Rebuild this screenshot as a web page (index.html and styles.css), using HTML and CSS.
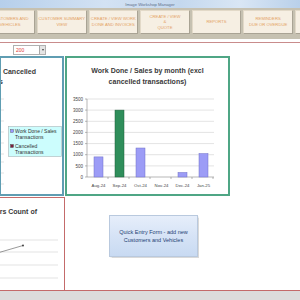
FILE: index.html
```html
<!DOCTYPE html>
<html>
<head>
<meta charset="utf-8">
<link rel="stylesheet" href="styles.css">
</head>
<body>
<div class="app">
  <div class="titlebar"><span>Image Workshop Manager</span></div>
  <div class="nav">
    <div class="navbtn">CUSTOMERS AND<br>VEHICLES</div>
    <div class="navbtn">CUSTOMER SUMMARY<br>VIEW</div>
    <div class="navbtn">CREATE / VIEW WORK<br>DONE AND INVOICES</div>
    <div class="navbtn">CREATE / VIEW<br>&amp;<br>QUOTE</div>
    <div class="navbtn">REPORTS</div>
    <div class="navbtn">REMINDERS<br>DUE OR OVERDUE</div>
    <div class="navbtn">SETTINGS</div>
  </div>
  <div class="gap"></div>
  <div class="redrule"></div>
  <div class="toolbar">
    <div class="select"><span class="val">200</span><span class="arrow"><span class="tri"></span></span></div>
  </div>
  <div class="charts">
    <div class="panel panel-left">
      <svg class="chart" width="61" height="136" viewBox="0 0 61 136">
        <text class="title" x="35" y="15.5" text-anchor="end">Work Done / Sales vs Cancelled</text>
        <text class="title" x="2" y="25.5" text-anchor="end">Transactions</text>
        <g class="grid">
          <line x1="-1" x2="3" y1="41" y2="41"/>
          <line x1="-1" x2="3" y1="52" y2="52"/>
          <line x1="-1" x2="3" y1="63" y2="63"/>
          <line x1="-1" x2="3" y1="74" y2="74"/>
          <line x1="-1" x2="3" y1="85" y2="85"/>
          <line x1="-1" x2="3" y1="96" y2="96"/>
          <line x1="-1" x2="3" y1="104" y2="104"/>
          <line x1="-1" x2="3" y1="115" y2="115"/>
          <line x1="-1" x2="3" y1="126" y2="126"/>
        </g>
        <rect class="legend" x="7.5" y="68.5" width="53" height="30"/>
        <rect x="9.5" y="71.5" width="3" height="3" fill="#9999ff" stroke="#555" stroke-width="0.4"/>
        <text class="leg" x="14" y="74.8">Work Done / Sales</text>
        <text class="leg" x="14" y="80.8">Transactions</text>
        <rect x="9.5" y="86.5" width="3" height="3" fill="#7a1f3d" stroke="#444" stroke-width="0.4"/>
        <text class="leg" x="14" y="89.8">Cancelled</text>
        <text class="leg" x="14" y="95.8">Transactions</text>
      </svg>
    </div>
    <div class="panel panel-mid">
      <svg class="chart" width="161" height="136" viewBox="0 0 161 136">
        <text class="title" x="80.5" y="14.5" text-anchor="middle">Work Done / Sales by month (excl</text>
        <text class="title" x="80.5" y="25.5" text-anchor="middle">cancelled transactions)</text>
        <g class="grid">
          <line x1="20" x2="147" y1="107.9" y2="107.9"/>
          <line x1="20" x2="147" y1="96.7" y2="96.7"/>
          <line x1="20" x2="147" y1="85.6" y2="85.6"/>
          <line x1="20" x2="147" y1="74.4" y2="74.4"/>
          <line x1="20" x2="147" y1="63.3" y2="63.3"/>
          <line x1="20" x2="147" y1="52.1" y2="52.1"/>
          <line x1="20" x2="147" y1="41" y2="41"/>
        </g>
        <g class="axis">
          <line x1="20" x2="20" y1="41" y2="119"/>
          <line x1="18" x2="147" y1="119" y2="119"/>
          <line x1="18" x2="20" y1="107.9" y2="107.9"/>
          <line x1="18" x2="20" y1="96.7" y2="96.7"/>
          <line x1="18" x2="20" y1="85.6" y2="85.6"/>
          <line x1="18" x2="20" y1="74.4" y2="74.4"/>
          <line x1="18" x2="20" y1="63.3" y2="63.3"/>
          <line x1="18" x2="20" y1="52.1" y2="52.1"/>
          <line x1="18" x2="20" y1="41" y2="41"/>
          <line x1="41" x2="41" y1="119" y2="121"/>
          <line x1="62" x2="62" y1="119" y2="121"/>
          <line x1="83" x2="83" y1="119" y2="121"/>
          <line x1="104" x2="104" y1="119" y2="121"/>
          <line x1="125" x2="125" y1="119" y2="121"/>
          <line x1="146" x2="146" y1="119" y2="121"/>
        </g>
        <g class="ylab">
          <text x="16" y="120.6">0</text>
          <text x="16" y="109.5">500</text>
          <text x="16" y="98.3">1000</text>
          <text x="16" y="87.2">1500</text>
          <text x="16" y="76">2000</text>
          <text x="16" y="64.9">2500</text>
          <text x="16" y="53.7">3000</text>
          <text x="16" y="42.6">3500</text>
        </g>
        <rect class="bar" x="27" y="98.9" width="9" height="20.1"/>
        <rect class="bar green" x="48" y="52.1" width="9" height="66.9"/>
        <rect class="bar" x="69" y="90" width="9" height="29"/>
        <rect class="bar" x="111" y="114.5" width="9" height="4.5"/>
        <rect class="bar" x="132" y="95.6" width="9" height="23.4"/>
        <g class="xlab">
          <text x="31.5" y="128.5">Aug-24</text>
          <text x="52.5" y="128.5">Sep-24</text>
          <text x="73.5" y="128.5">Oct-24</text>
          <text x="94.5" y="128.5">Nov-24</text>
          <text x="115.5" y="128.5">Dec-24</text>
          <text x="136.5" y="128.5">Jan-25</text>
        </g>
      </svg>
    </div>
  </div>
  <div class="bottom">
    <div class="panel-red">
      <svg class="chart" width="64" height="92" viewBox="0 0 64 92">
        <text class="title" x="37" y="15.5" text-anchor="end">Reminders Count of</text>
        <g class="grid">
          <line x1="0" x2="58" y1="42" y2="42"/>
          <line x1="0" x2="58" y1="54" y2="54"/>
          <line x1="0" x2="58" y1="67" y2="67"/>
          <line x1="0" x2="58" y1="80" y2="80"/>
        </g>
        <line class="trend" x1="-1" y1="54.5" x2="23" y2="47.5"/>
        <circle cx="23" cy="47.5" r="0.9" fill="#333"/>
      </svg>
    </div>
    <div class="quick-area">
      <div class="quick-btn">Quick Entry Form - add new<br>Customers and Vehicles</div>
    </div>
  </div>
  <div class="status"></div>
</div>
</body>
</html>
```
FILE: styles.css
```css
* { box-sizing: border-box; margin: 0; padding: 0; }
html, body { width: 300px; height: 300px; overflow: hidden; background: #fff; }
body { font-family: "Liberation Sans", Arial, sans-serif; }

.app { display: flex; flex-direction: column; width: 300px; height: 300px; }

.titlebar {
  height: 8px;
  flex: 0 0 8px;
  background: linear-gradient(90deg, #b6cfeb 0%, #d3e2f3 35%, #c4d8ee 60%, #d9e6f4 80%, #b9d0ea 100%);
  display: flex; justify-content: center; align-items: center;
  font-size: 4.2px; color: #5d6f8c;
}

.nav {
  height: 31px; flex: 0 0 31px;
  background: #c6c1b1;
  display: flex; gap: 2px;
  padding-top: 2px;
  overflow: hidden;
}
.navbtn {
  flex: 0 0 49.6px; height: 24px;
  background: #f6efe3;
  border: 1px solid #e2d9c8;
  border-right-color: #a9a394; border-bottom-color: #a9a394;
  display: flex; align-items: center; justify-content: center;
  text-align: center;
  font-size: 4.2px; line-height: 5.6px;
  color: #e4a264;
}
.navbtn:first-child { margin-left: -14.6px; }

.gap { height: 3px; flex: 0 0 3px; }
.redrule { height: 1px; flex: 0 0 1px; background: #c98c8c; }

.toolbar { height: 13px; flex: 0 0 13px; padding: 2px 0 0 13px; }
.select {
  width: 33px; height: 10px;
  border: 1px solid #b0b0b0; background: #fff;
  display: flex; align-items: stretch;
}
.select .val { flex: 1; font-size: 5px; line-height: 8px; color: #e23b3b; padding-left: 2px; }
.select .arrow {
  width: 6px; background: #e4e4e4; border-left: 1px solid #a8a8a8;
  display: flex; align-items: center; justify-content: center;
}
.select .tri {
  width: 0; height: 0;
  border-left: 1.5px solid transparent; border-right: 1.5px solid transparent;
  border-top: 2px solid #444;
}

.charts { height: 140px; flex: 0 0 140px; display: flex; gap: 1px; }
.panel { background: #fff; overflow: hidden; }
.panel-left { margin-left: -1px; width: 65px; border: 2px solid #5f9db2; }
.panel-mid { width: 165px; border: 2px solid #4fa685; }

.chart { display: block; overflow: hidden; }
.chart .title { font-family: "Liberation Sans", Arial, sans-serif; font-weight: bold; font-size: 7px; fill: #3a3a3a; }
.chart .grid line { stroke: #d0d0d0; stroke-width: 0.6; }
.chart .axis line { stroke: #888; stroke-width: 0.6; }
.chart .ylab text { font-size: 4.5px; fill: #444; text-anchor: end; font-family: "Liberation Sans", Arial, sans-serif; }
.chart .xlab text { font-size: 4.3px; fill: #444; text-anchor: middle; font-family: "Liberation Sans", Arial, sans-serif; }
.chart .bar { fill: #9c9cf6; stroke: #6f6fc8; stroke-width: 0.5; }
.chart .bar.green { fill: #2f8e5b; stroke: #1d5e3b; }
.chart .legend { fill: #ccfdfd; stroke: #a8b4b8; stroke-width: 0.6; }
.chart .leg { font-size: 5px; fill: #333; font-family: "Liberation Sans", Arial, sans-serif; }
.chart .trend { stroke: #555; stroke-width: 0.6; }

.bottom {
  height: 95px; flex: 0 0 95px;
  display: flex;
  border-bottom: 1px solid #c46b6b;
}
.panel-red {
  width: 65px; margin-top: 1px;
  border-top: 1px solid #c46b6b; border-right: 1px solid #c46b6b;
  overflow: hidden;
}
.quick-area { flex: 1; padding: 19px 0 0 44px; }
.quick-btn {
  width: 89px; height: 42px;
  background: linear-gradient(180deg, #e6eefa 0%, #d6e3f6 50%, #c8daf2 100%);
  border: 1px solid #b9c9de;
  box-shadow: 0.5px 0.5px 1px rgba(0,0,0,0.15);
  display: flex; align-items: center; justify-content: center;
  text-align: center;
  font-size: 5.5px; line-height: 8px;
  color: #243f73;
}

.status { flex: 1; background: #dcdcdc; }
```
